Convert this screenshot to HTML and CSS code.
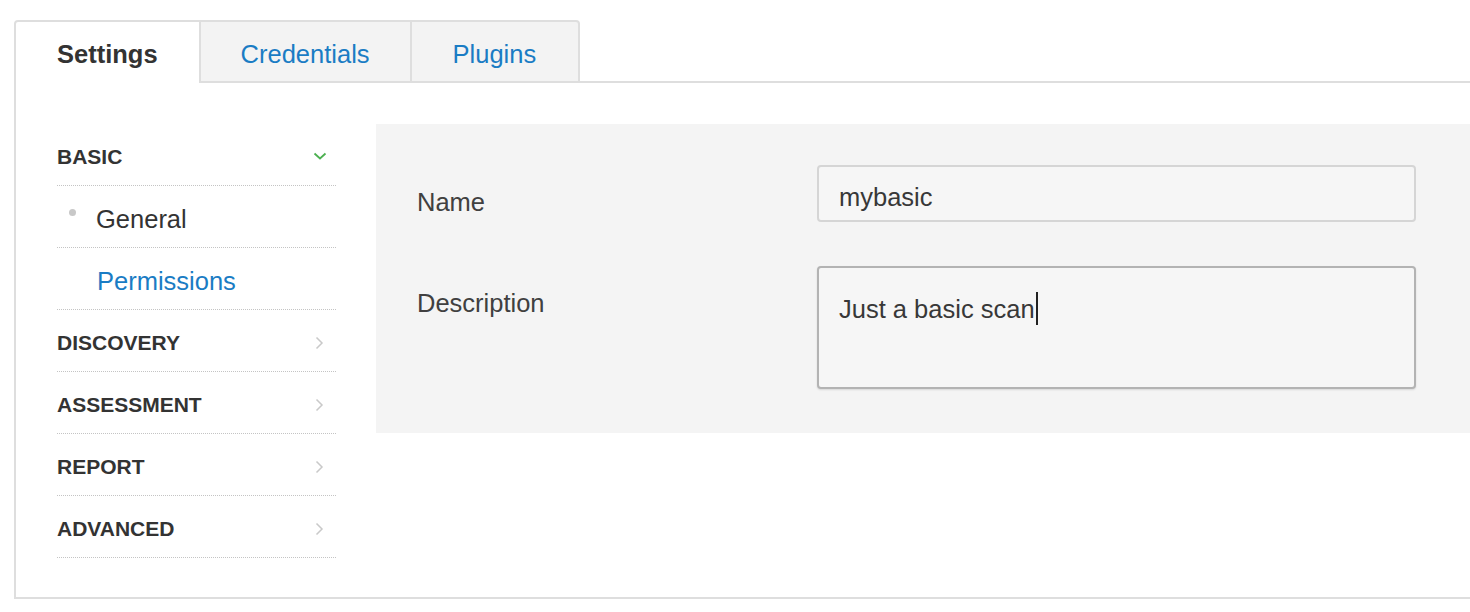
FILE: index.html
```html
<!DOCTYPE html>
<html>
<head>
<meta charset="utf-8">
<link rel="stylesheet" href="styles.css">
</head>
<body>
<div class="wrap">
  <div class="tabs">
    <div class="tab active">Settings</div>
    <div class="tab">Credentials</div>
    <div class="tab tab-last">Plugins</div>
    <div class="tab-fill"></div>
  </div>
  <div class="content">
    <nav class="sidebar">
      <div class="row head">
        <span>BASIC</span>
        <svg class="chev-down" width="14" height="8" viewBox="0 0 14 8"><polyline points="1.5,1.5 7,6.5 12.5,1.5" fill="none" stroke="#4cb050" stroke-width="1.8"/></svg>
      </div>
      <div class="row sub">
        <span class="bullet"></span>
        <span>General</span>
      </div>
      <div class="row sub link">
        <span>Permissions</span>
      </div>
      <div class="row head">
        <span>DISCOVERY</span>
        <svg class="chev-right" width="9" height="14" viewBox="0 0 9 14"><polyline points="1.5,1.5 7,7 1.5,12.5" fill="none" stroke="#c9c9c9" stroke-width="1.5"/></svg>
      </div>
      <div class="row head">
        <span>ASSESSMENT</span>
        <svg class="chev-right" width="9" height="14" viewBox="0 0 9 14"><polyline points="1.5,1.5 7,7 1.5,12.5" fill="none" stroke="#c9c9c9" stroke-width="1.5"/></svg>
      </div>
      <div class="row head">
        <span>REPORT</span>
        <svg class="chev-right" width="9" height="14" viewBox="0 0 9 14"><polyline points="1.5,1.5 7,7 1.5,12.5" fill="none" stroke="#c9c9c9" stroke-width="1.5"/></svg>
      </div>
      <div class="row head">
        <span>ADVANCED</span>
        <svg class="chev-right" width="9" height="14" viewBox="0 0 9 14"><polyline points="1.5,1.5 7,7 1.5,12.5" fill="none" stroke="#c9c9c9" stroke-width="1.5"/></svg>
      </div>
    </nav>
    <section class="panel">
      <div class="field">
        <label class="label">Name</label>
        <div class="input">mybasic</div>
      </div>
      <div class="field">
        <label class="label">Description</label>
        <div class="textarea">Just a basic scan<span class="caret"></span></div>
      </div>
    </section>
  </div>
</div>
</body>
</html>
```

FILE: styles.css
```css
html, body {
  margin: 0;
  padding: 0;
  background: #ffffff;
  overflow: hidden;
}

body {
  font-family: "Liberation Sans", Arial, Helvetica, sans-serif;
  color: #333333;
  padding: 20px 0 0 14px;
}

.wrap {
  width: auto;
}

.tabs {
  display: flex;
  height: 63px;
}

.tab {
  box-sizing: border-box;
  height: 63px;
  padding: 6px 40px 0;
  display: flex;
  align-items: center;
  font-size: 25.5px;
  color: #1a7cc4;
  background: #f3f3f3;
  border-top: 2px solid #dedede;
  border-right: 2px solid #dedede;
  border-bottom: 2px solid #dedede;
}

.tab.active {
  background: #ffffff;
  color: #333333;
  font-weight: bold;
  border-left: 2px solid #dedede;
  border-bottom: none;
  border-top-left-radius: 4px;
  padding: 4px 41px 0;
}

.tab.tab-last {
  padding: 6px 42px 0 41px;
  border-top-right-radius: 4px;
}

.tab-fill {
  flex: 1;
  border-bottom: 2px solid #dedede;
}

.content {
  display: flex;
  align-items: flex-start;
  gap: 40px;
  border-left: 2px solid #dedede;
  border-bottom: 2px solid #dedede;
  padding: 41px 0 39px 41px;
}

.sidebar {
  width: 279px;
  flex: none;
}

.row {
  box-sizing: border-box;
  height: 62px;
  display: flex;
  align-items: center;
  border-bottom: 1px dotted #c4c4c4;
  padding-top: 4px;
}

.row.head {
  justify-content: space-between;
  font-weight: bold;
  font-size: 21px;
  color: #333333;
  padding-right: 9px;
}

.row.sub {
  font-size: 25.5px;
  color: #333333;
  padding-top: 6px;
}

.row.sub.link {
  color: #1a7cc4;
  padding-left: 40px;
}

.bullet {
  width: 7px;
  height: 7px;
  border-radius: 50%;
  background: #c8c8c8;
  margin-left: 12px;
  margin-right: 20px;
  margin-bottom: 14px;
}

.chev-down {
  margin-top: -2px;
}

.chev-right {
  margin-right: 3px;
}

.panel {
  flex: 1;
  align-self: flex-start;
  background: #f4f4f4;
  padding: 41px 0 44px 41px;
  display: flex;
  flex-direction: column;
  gap: 44px;
}

.field {
  display: flex;
  align-items: flex-start;
}

.label {
  width: 400px;
  flex: none;
  font-size: 25.5px;
  line-height: 30px;
  color: #404040;
  padding-top: 22px;
}

.input, .textarea {
  box-sizing: border-box;
  width: 599px;
  background: #f6f6f6;
  border-radius: 4px;
  font-size: 25.5px;
  line-height: 30px;
  color: #383838;
  padding-left: 20px;
}

.input {
  height: 57px;
  border: 2px solid #d5d5d5;
  padding-top: 15px;
}

.textarea {
  height: 123px;
  border: 2px solid #b3b3b3;
  box-shadow: 0 1px 2px rgba(0, 0, 0, 0.12);
  padding-top: 24px;
}

.caret {
  display: inline-block;
  width: 2px;
  height: 33px;
  background: #222222;
  vertical-align: -7px;
  margin-left: 1px;
}
```
